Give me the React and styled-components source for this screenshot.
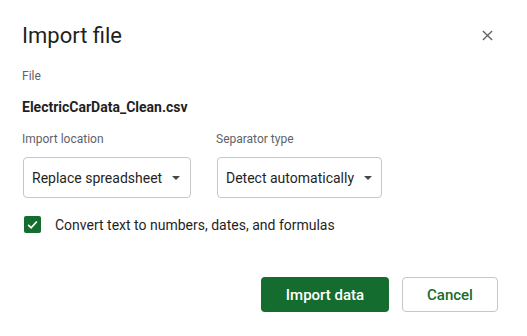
import React from 'react';
import styled, { createGlobalStyle } from 'styled-components';

const GlobalStyle = createGlobalStyle`
  html, body {
    margin: 0;
    padding: 0;
    background: #fff;
    font-family: Roboto, "Liberation Sans", Arial, sans-serif;
    color: #1f1f1f;
  }
`;

const SDialog = styled.div`
  width: 527px;
  height: 336px;
  box-sizing: border-box;
  padding: 22px 29px 0 22px;
  display: flex;
  flex-direction: column;
`;

const SHeader = styled.div`
  display: flex;
  justify-content: space-between;
  align-items: center;
  height: 26px;
`;

const STitle = styled.h1`
  margin: 0;
  font-size: 22px;
  font-weight: 400;
  color: #1f1f1f;
`;

const SClose = styled.button`
  border: none;
  background: none;
  padding: 0;
  width: 24px;
  height: 24px;
  margin-right: -1px;
  display: flex;
  align-items: center;
  justify-content: center;
  cursor: pointer;
`;

const SLabel = styled.div`
  font-size: 12px;
  color: #5f6368;
  margin-top: ${(p) => p.$top || 0}px;
  line-height: 16px;
`;

const SFileName = styled.div`
  font-size: 14px;
  font-weight: 700;
  margin-top: 14px;
  line-height: 18px;
  color: #1f1f1f;
`;

const SRow = styled.div`
  display: flex;
  gap: 25px;
  margin-top: 15px;
`;

const SField = styled.div`
  display: flex;
  flex-direction: column;
`;

const SSelect = styled.div`
  margin-top: 10px;
  margin-left: 1px;
  width: ${(p) => p.$w}px;
  height: 41px;
  box-sizing: border-box;
  border: 1px solid #c4c7c5;
  border-radius: 4px;
  display: flex;
  align-items: center;
  padding-left: 8px;
  gap: 10px;
  font-size: 14px;
  color: #1f1f1f;
`;

const SArrow = styled.span`
  width: 0;
  height: 0;
  border-left: 4px solid transparent;
  border-right: 4px solid transparent;
  border-top: 4px solid #444746;
  margin-top: 1px;
`;

const SCheckRow = styled.label`
  display: flex;
  align-items: center;
  gap: 14px;
  margin-top: 18px;
  margin-left: 2px;
  font-size: 14px;
  color: #1f1f1f;
`;

const SCheckbox = styled.span`
  width: 17px;
  height: 17px;
  border-radius: 2px;
  background: #146c2e;
  display: flex;
  align-items: center;
  justify-content: center;
`;

const SFooter = styled.div`
  display: flex;
  justify-content: flex-end;
  gap: 13px;
  margin-top: 44px;
`;

const SButton = styled.button`
  height: 35px;
  box-sizing: border-box;
  width: ${(p) => p.$w}px;
  border-radius: 4px;
  font-family: Roboto, "Liberation Sans", Arial, sans-serif;
  font-size: 15px;
  font-weight: 500;
  cursor: pointer;
  background: ${(p) => (p.$primary ? '#146c2e' : '#fff')};
  color: ${(p) => (p.$primary ? '#fff' : '#146c2e')};
  border: ${(p) => (p.$primary ? 'none' : '1px solid #c4c7c5')};
`;

export default function App() {
  return (
    <>
      <GlobalStyle />
      <SDialog>
        <SHeader>
          <STitle>Import file</STitle>
          <SClose aria-label="Close">
            <svg width="11" height="11" viewBox="0 0 12 12">
              <path d="M1 1 L11 11 M11 1 L1 11" stroke="#5f6368" strokeWidth="1.5" />
            </svg>
          </SClose>
        </SHeader>
        <SLabel $top={20}>File</SLabel>
        <SFileName>ElectricCarData_Clean.csv</SFileName>
        <SRow>
          <SField>
            <SLabel>Import location</SLabel>
            <SSelect $w={168}>
              Replace spreadsheet <SArrow />
            </SSelect>
          </SField>
          <SField>
            <SLabel>Separator type</SLabel>
            <SSelect $w={165}>
              Detect automatically <SArrow />
            </SSelect>
          </SField>
        </SRow>
        <SCheckRow>
          <SCheckbox>
            <svg width="13" height="13" viewBox="0 0 24 24">
              <path d="M4 12.5 L9.5 18 L20 6.5" stroke="#fff" strokeWidth="3.2" fill="none" />
            </svg>
          </SCheckbox>
          Convert text to numbers, dates, and formulas
        </SCheckRow>
        <SFooter>
          <SButton $primary $w={128}>Import data</SButton>
          <SButton $w={96}>Cancel</SButton>
        </SFooter>
      </SDialog>
    </>
  );
}
